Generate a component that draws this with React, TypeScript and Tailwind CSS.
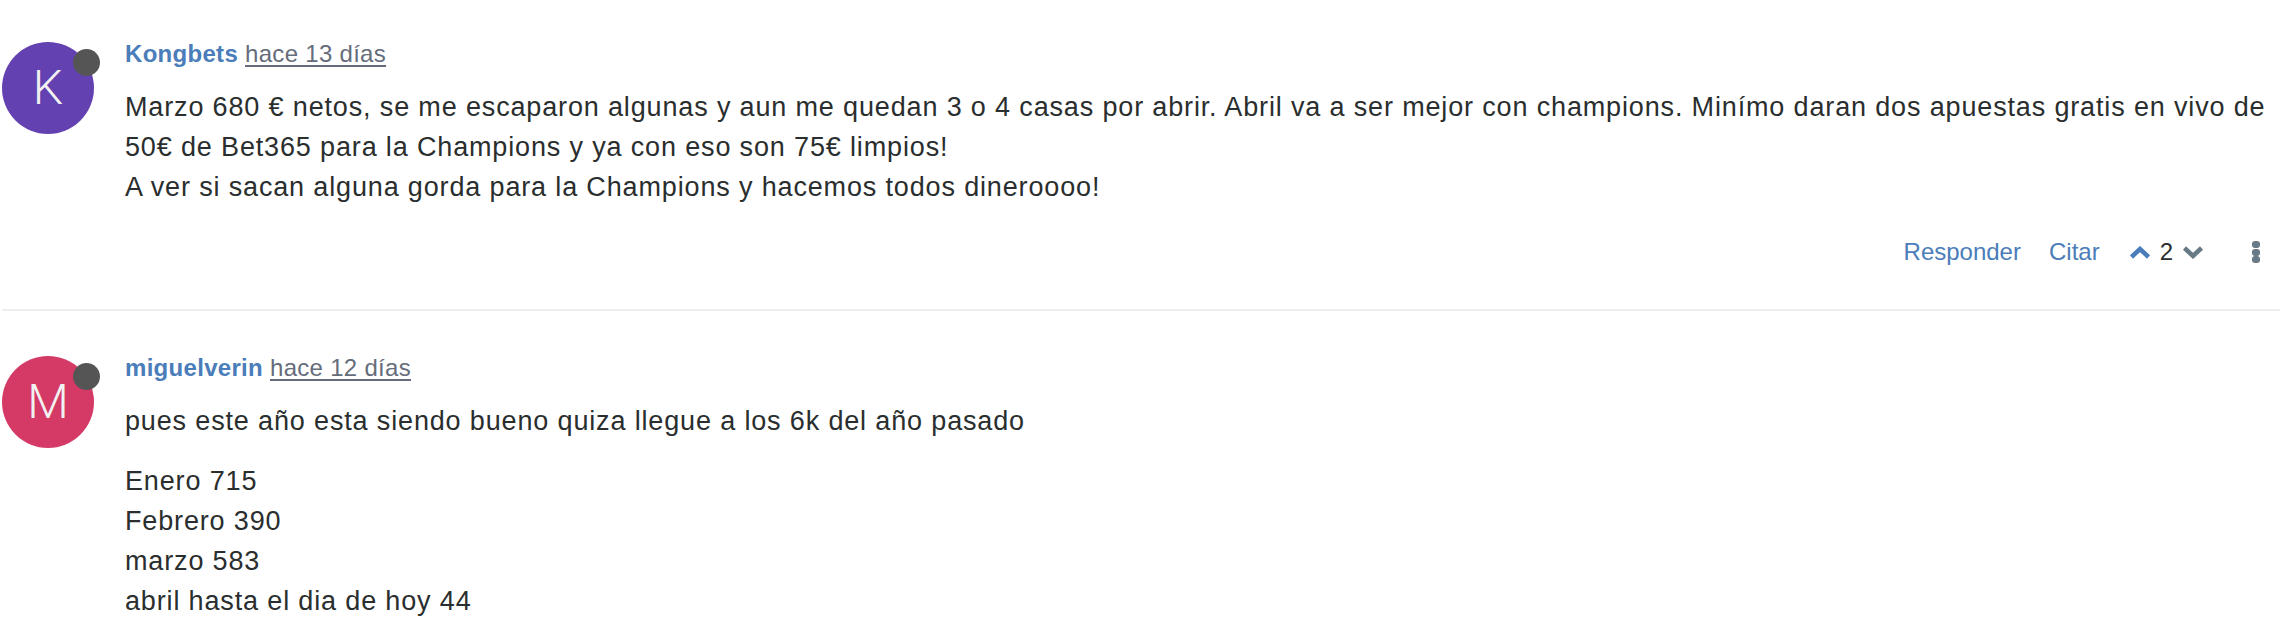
import React from "react";

interface Comment {
  initial: string;
  color: string;
  author: string;
  time: string;
  paragraphs: string[][];
  votes?: number;
  showActions?: boolean;
}

const comments: Comment[] = [
  {
    initial: "K",
    color: "bg-[#6441b0]",
    author: "Kongbets",
    time: "hace 13 días",
    paragraphs: [
      [
        "Marzo 680 € netos, se me escaparon algunas y aun me quedan 3 o 4 casas por abrir. Abril va a ser mejor con champions. Minímo daran dos apuestas gratis en vivo de",
        "50€ de Bet365 para la Champions y ya con eso son 75€ limpios!",
        "A ver si sacan alguna gorda para la Champions y hacemos todos dineroooo!",
      ],
    ],
    votes: 2,
    showActions: true,
  },
  {
    initial: "M",
    color: "bg-[#d53a67]",
    author: "miguelverin",
    time: "hace 12 días",
    paragraphs: [
      ["pues este año esta siendo bueno quiza llegue a los 6k del año pasado"],
      ["Enero 715", "Febrero 390", "marzo 583", "abril hasta el dia de hoy 44"],
    ],
  },
];

function Avatar({ initial, color }: { initial: string; color: string }) {
  return (
    <div className="relative ml-[2px] mt-[3px] h-[92px] w-[92px] shrink-0">
      <div
        className={`flex h-[92px] w-[92px] items-center justify-center rounded-full ${color} text-[48px] font-light text-[#f2f2f2]`}
        style={{ fontFamily: "Roboto, 'Liberation Sans', sans-serif" }}
      >
        {initial}
      </div>
      <span className="absolute left-[71px] top-[7px] h-[27px] w-[27px] rounded-full bg-[#555555]" />
    </div>
  );
}

function Actions({ votes }: { votes: number }) {
  return (
    <div className="mt-[29px] flex h-[32px] items-center justify-end pr-[20px] text-[24px] leading-[32px]">
      <button className="text-[#4a7db9]">Responder</button>
      <button className="ml-[28px] text-[#4a7db9]">Citar</button>
      <div className="ml-[29px] flex items-center gap-[9px]">
        <svg width="22" height="13" viewBox="0 0 22 13" fill="none">
          <polyline points="2.5,11 11,3 19.5,11" stroke="#4a7db9" strokeWidth="4.5" />
        </svg>
        <span className="text-[#2a2e2e]">{votes}</span>
        <svg width="22" height="13" viewBox="0 0 22 13" fill="none">
          <polyline points="2.5,2 11,10 19.5,2" stroke="#687a86" strokeWidth="4.5" />
        </svg>
      </div>
      <div className="ml-[48px] flex w-[8px] flex-col gap-[0.5px]">
        <span className="h-[7px] w-[8px] rounded-[3px] bg-[#687a86]" />
        <span className="h-[7px] w-[8px] rounded-[3px] bg-[#687a86]" />
        <span className="h-[7px] w-[8px] rounded-[3px] bg-[#687a86]" />
      </div>
    </div>
  );
}

function CommentItem({ comment }: { comment: Comment }) {
  return (
    <div className="flex">
      <Avatar initial={comment.initial} color={comment.color} />
      <div className="ml-[31px] flex-1">
        <div className="text-[24px] leading-[30px] tracking-[0.3px]">
          <span className="font-bold text-[#4a7db9]">{comment.author}</span>{" "}
          <span className="text-[#656c7a] underline decoration-[2px] underline-offset-[3px]">{comment.time}</span>
        </div>
        <div className="mt-[18px] text-[27px] leading-[40px] tracking-[0.85px] text-[#2a2e2e]">
          {comment.paragraphs.map((lines, i) => (
            <p key={i} className={i > 0 ? "mt-[20px] whitespace-nowrap" : "whitespace-nowrap"}>
              {lines.map((line, j) => (
                <React.Fragment key={j}>
                  {j > 0 && <br />}
                  {line}
                </React.Fragment>
              ))}
            </p>
          ))}
        </div>
        {comment.showActions && <Actions votes={comment.votes ?? 0} />}
      </div>
    </div>
  );
}

export default function App() {
  return (
    <div
      className="h-[632px] w-[2280px] overflow-hidden bg-white pt-[39px]"
      style={{ fontFamily: "'Liberation Sans', Arial, sans-serif" }}
    >
      <CommentItem comment={comments[0]} />
      <div className="mt-[41px] ml-[2px] h-[2px] bg-[#eceef0]" />
      <div className="pt-[42px]">
        <CommentItem comment={comments[1]} />
      </div>
    </div>
  );
}
